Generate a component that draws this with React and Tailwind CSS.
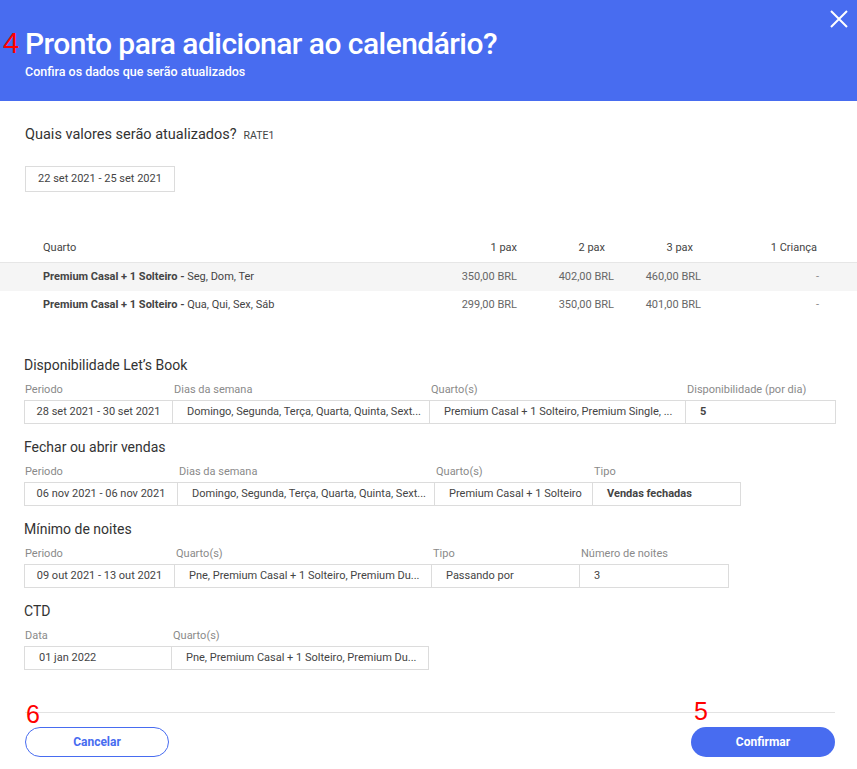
import React from 'react';

const rows = [
  { room: 'Premium Casal + 1 Solteiro -', days: 'Seg, Dom, Ter', p1: '350,00 BRL', p2: '402,00 BRL', p3: '460,00 BRL', kid: '-' },
  { room: 'Premium Casal + 1 Solteiro -', days: 'Qua, Qui, Sex, Sáb', p1: '299,00 BRL', p2: '350,00 BRL', p3: '401,00 BRL', kid: '-' },
];

const sections = [
  {
    title: 'Disponibilidade Let’s Book',
    cells: [
      { label: 'Periodo', value: '28 set 2021 - 30 set 2021', w: 'w-[149px]', center: true },
      { label: 'Dias da semana', value: 'Domingo, Segunda, Terça, Quarta, Quinta, Sext...', w: 'w-[257px]' },
      { label: 'Quarto(s)', value: 'Premium Casal + 1 Solteiro, Premium Single, ...', w: 'w-[256px]' },
      { label: 'Disponibilidade (por dia)', value: '5', w: 'w-[150px]', bold: true },
    ],
  },
  {
    title: 'Fechar ou abrir vendas',
    cells: [
      { label: 'Periodo', value: '06 nov 2021 - 06 nov 2021', w: 'w-[154px]', center: true },
      { label: 'Dias da semana', value: 'Domingo, Segunda, Terça, Quarta, Quinta, Sext...', w: 'w-[257px]' },
      { label: 'Quarto(s)', value: 'Premium Casal + 1 Solteiro', w: 'w-[158px]' },
      { label: 'Tipo', value: 'Vendas fechadas', w: 'w-[148px]', bold: true },
    ],
  },
  {
    title: 'Mínimo de noites',
    cells: [
      { label: 'Periodo', value: '09 out 2021 - 13 out 2021', w: 'w-[151px]', center: true },
      { label: 'Quarto(s)', value: 'Pne, Premium Casal + 1 Solteiro, Premium Du...', w: 'w-[257px]' },
      { label: 'Tipo', value: 'Passando por', w: 'w-[148px]' },
      { label: 'Número de noites', value: '3', w: 'w-[149px]' },
    ],
  },
  {
    title: 'CTD',
    cells: [
      { label: 'Data', value: '01 jan 2022', w: 'w-[148px]' },
      { label: 'Quarto(s)', value: 'Pne, Premium Casal + 1 Solteiro, Premium Du...', w: 'w-[257px]' },
    ],
  },
];

function Section({ title, cells }) {
  return (
    <div className="mb-[15px]">
      <h3 className="text-[14px] leading-[17px] text-[#333] mb-[9px]">{title}</h3>
      <div className="flex">
        {cells.map((c, i) => (
          <div key={i} className={`${c.w} shrink-0`}>
            <div className="text-[11px] leading-[14px] text-[#8a8a8a] pl-px mb-[3px] whitespace-nowrap">{c.label}</div>
            <div
              className={`h-[24px] border-y border-r border-[#dcdcdc] ${i === 0 ? 'border-l' : ''} flex items-center text-[11px] text-[#444] whitespace-nowrap overflow-hidden ${
                c.center ? 'justify-center' : 'pl-[14px]'
              } ${c.bold ? 'font-bold' : ''}`}
            >
              {c.value}
            </div>
          </div>
        ))}
      </div>
    </div>
  );
}

export default function App() {
  return (
    <div className="w-[857px] h-[769px] bg-white overflow-hidden" style={{ fontFamily: 'Roboto, "Liberation Sans", sans-serif' }}>
      {/* header */}
      <div className="relative h-[101px] bg-[#486cf0] pt-[25px] pl-[25px]">
        <span className="absolute left-[3px] top-[27px] text-[29px] leading-[32px] text-[#ff0000]" style={{ fontFamily: '"Liberation Sans", sans-serif' }}>4</span>
        <h1 className="text-[30px] leading-[38px] font-medium text-white tracking-[-0.55px]">Pronto para adicionar ao calendário?</h1>
        <p className="mt-[2px] text-[12.5px] leading-[14px] font-medium text-white">Confira os dados que serão atualizados</p>
        <button className="absolute right-[8px] top-[9px] text-white">
          <svg width="20" height="20" viewBox="0 0 20 20" fill="none" stroke="currentColor" strokeWidth="2">
            <path d="M2 2L18 18M18 2L2 18" />
          </svg>
        </button>
      </div>

      <div className="px-[25px] pt-[25px]">
        <div className="flex items-baseline gap-[7px]">
          <h2 className="text-[14.5px] leading-[18px] text-[#333]">Quais valores serão atualizados?</h2>
          <span className="text-[10.5px] text-[#444]">RATE1</span>
        </div>
        <div className="mt-[22px] w-[150px] h-[26px] border border-[#dcdcdc] flex items-center justify-center text-[11px] text-[#444]">
          22 set 2021 - 25 set 2021
        </div>
      </div>

      {/* table */}
      <div className="mt-[43px] text-[11px]">
        <div className="flex h-[28px] items-center text-[#444] border-b border-[#e6e6e6]">
          <div className="w-[430px] pl-[43px]">Quarto</div>
          <div className="w-[87px] text-right">1 pax</div>
          <div className="w-[97px] text-right pr-[9px]">2 pax</div>
          <div className="w-[87px] text-right pr-[8px]">3 pax</div>
          <div className="w-[118px] text-right pr-[2px]">1 Criança</div>
        </div>
        {rows.map((r, i) => (
          <div key={i} className={`flex h-[28px] items-center ${i === 0 ? 'bg-[#f5f5f5]' : ''}`}>
            <div className="w-[430px] pl-[43px] text-[#444]">
              <span className="font-bold">{r.room}</span> {r.days}
            </div>
            <div className="w-[87px] text-right text-[#666]">{r.p1}</div>
            <div className="w-[97px] text-right text-[#666]">{r.p2}</div>
            <div className="w-[87px] text-right text-[#666]">{r.p3}</div>
            <div className="w-[118px] text-right text-[#888]">{r.kid}</div>
          </div>
        ))}
      </div>

      <div className="px-[24px] pt-[38px]">
        {sections.map((s, i) => (
          <Section key={i} {...s} />
        ))}
      </div>

      {/* footer */}
      <div className="relative ml-[25px] mr-[22px] mt-[42px] border-t border-[#e3e3e3] pt-[14px] flex justify-between">
        <span className="absolute left-[1px] -top-[11px] text-[25px] leading-[25px] text-[#ff0000]" style={{ fontFamily: '"Liberation Sans", sans-serif' }}>6</span>
        <span className="absolute left-[669px] -top-[14px] text-[25px] leading-[25px] text-[#ff0000]" style={{ fontFamily: '"Liberation Sans", sans-serif' }}>5</span>
        <button className="w-[144px] h-[30px] rounded-full border border-[#486cf0] bg-white text-[#486cf0] text-[12px] font-bold">Cancelar</button>
        <button className="w-[144px] h-[30px] rounded-full bg-[#486cf0] text-white text-[12px] font-bold">Confirmar</button>
      </div>
    </div>
  );
}
